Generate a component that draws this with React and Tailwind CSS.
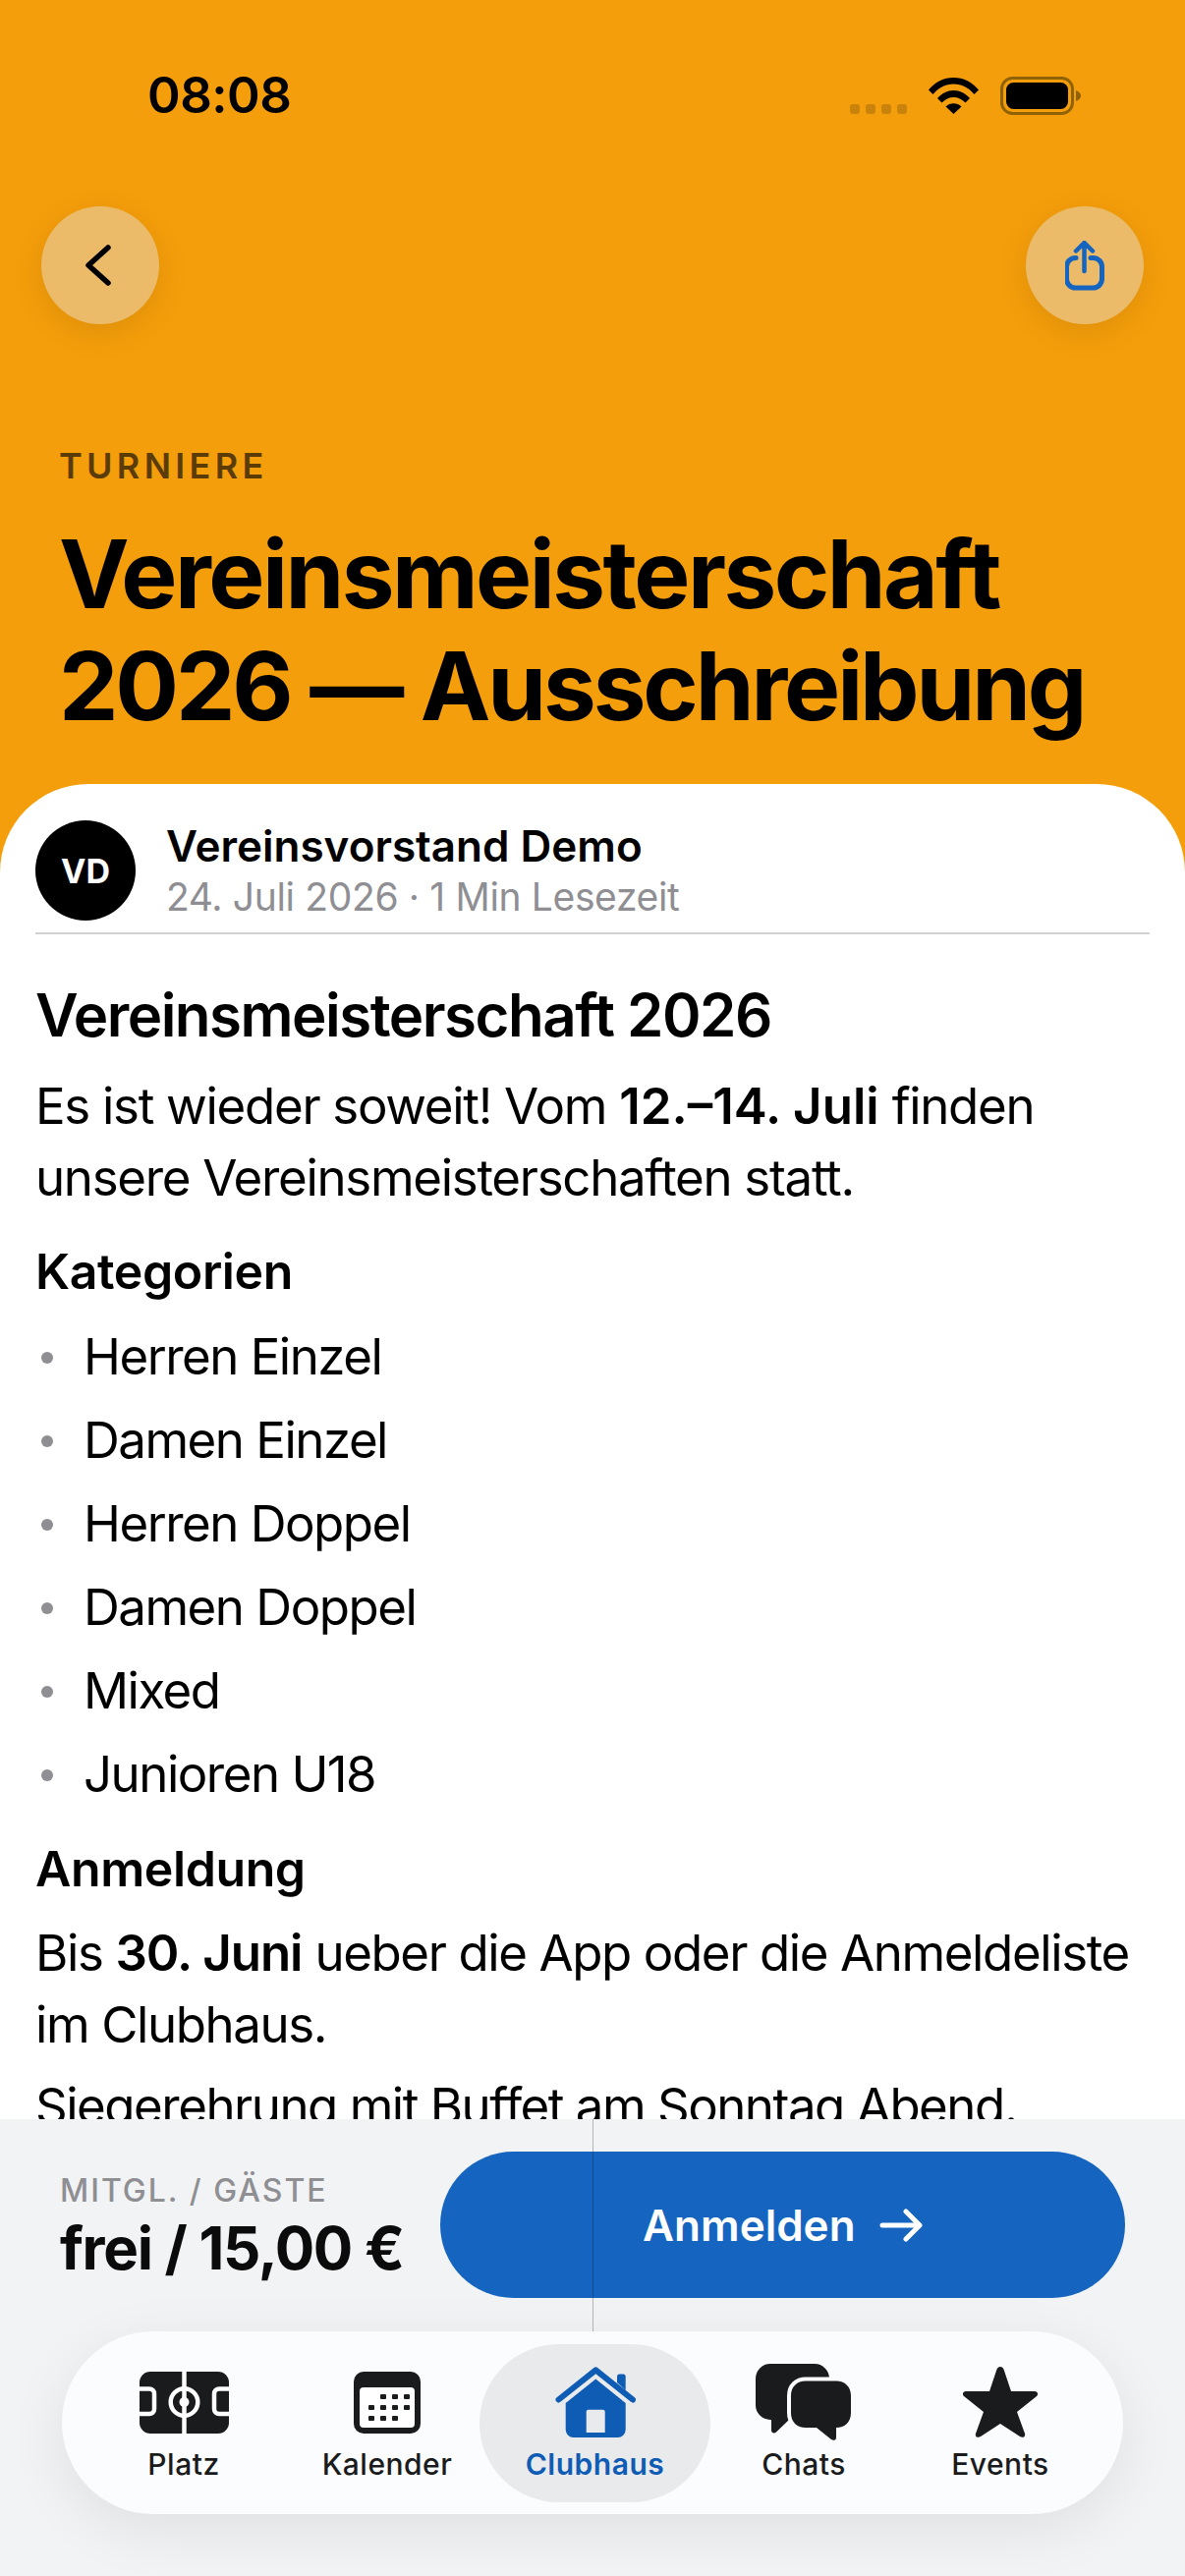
import React from 'react';

const WifiIcon = () => (
    <svg width="51" height="37" viewBox="0 0 51 37" fill="black">
        <path d="M0 12.5C6.5 4.5 15.5 0 25.5 0s19 4.500 25.500 12.500L46.500 17C41 10.500 33.500 6.500 25.500 6.500S10 10.500 4.500 17z" />
        <path d="M9 21C13.500 16 19 13 25.500 13S37.500 16 42 21l-4.500 4.500C34 22 30 20 25.500 20s-8.500 2-12 5.500z" />
        <path d="M17.500 29.500C20 27.300 22.500 26.300 25.500 26.300s5.500 1 8 3.200L25.500 37z" />
    </svg>
);

const BatteryIcon = () => (
    <svg width="82" height="39" viewBox="0 0 82 39">
        <rect x="1.500" y="1.500" width="72" height="36" rx="11" fill="none" stroke="#8f6205" strokeWidth="3" />
        <rect x="6" y="6" width="63" height="27" rx="7.500" fill="black" />
        <path d="M77 14c3 1 5 3 5 5.500S80 24 77 25z" fill="#8f6205" />
    </svg>
);

const ChevronLeft = () => (
    <svg className="mr-[4px]" width="26" height="42" viewBox="0 0 26 42" fill="none" stroke="black" strokeWidth="5.500" strokeLinecap="round" strokeLinejoin="round">
        <path d="M23 3 3 21l20 18" />
    </svg>
);

const ShareIcon = () => (
    <svg width="40" height="51" viewBox="0 0 40 51" fill="none" stroke="#1565c0" strokeLinecap="round" strokeLinejoin="round">
        <path d="M11 17.500H10.500a9 9 0 0 0-9 9V39a9 9 0 0 0 9 9H28.500a9 9 0 0 0 9-9V26.500a9 9 0 0 0-9-9H26" strokeWidth="5" />
        <path d="M19.500 31V2.500M11 10.500l8.500-8.500 8.500 8.500" strokeWidth="4.500" />
    </svg>
);

const PitchIcon = () => (
    <svg width="91" height="63" viewBox="0 0 91 63">
        <rect width="91" height="63" rx="11" fill="#1a1b1c" />
        <g fill="none" stroke="white" strokeWidth="4.500">
            <path d="M45.500 0v63" />
            <circle cx="45.500" cy="31" r="13.800" />
            <path d="M0 17.500h10a5 5 0 0 1 5 5v15.500a5 5 0 0 1-5 5H0" />
            <path d="M91 17.500H81a5 5 0 0 0-5 5v15.500a5 5 0 0 0 5 5h10" />
        </g>
        <circle cx="45.500" cy="31" r="5" fill="white" />
    </svg>
);

const CalendarIcon = () => (
    <svg width="68" height="63" viewBox="0 0 68 63">
        <rect width="68" height="63" rx="10" fill="#1a1b1c" />
        <rect x="6" y="16" width="56" height="41" rx="4" fill="white" />
        <g fill="#1a1b1c">
            <rect x="27" y="23" width="6" height="5" rx="1" />
            <rect x="39" y="23" width="6" height="5" rx="1" />
            <rect x="51" y="23" width="6" height="5" rx="1" />
            <rect x="15" y="34" width="6" height="5" rx="1" />
            <rect x="27" y="34" width="6" height="5" rx="1" />
            <rect x="39" y="34" width="6" height="5" rx="1" />
            <rect x="51" y="34" width="6" height="5" rx="1" />
            <rect x="15" y="45" width="6" height="5" rx="1" />
            <rect x="27" y="45" width="6" height="5" rx="1" />
            <rect x="39" y="45" width="6" height="5" rx="1" />
        </g>
    </svg>
);

const HomeIcon = () => (
    <svg width="82" height="72" viewBox="0 0 82 72" fill="#0f5cb5">
        <path fillRule="evenodd" d="M41.300 12.500 71.700 37v27a8 8 0 0 1-8 8H18.700a8 8 0 0 1-8-8V37zM33.700 43.700a2 2 0 0 0-2 2V67H50.700V45.700a2 2 0 0 0-2-2z" />
        <path d="M63 16V10a2.500 2.500 0 0 1 2.500-2.500h3.700a2.500 2.500 0 0 1 2.500 2.500V24z" />
        <path d="M3.500 33.500 41.300 3.300l37.700 30.200" fill="none" stroke="#0f5cb5" strokeWidth="6" strokeLinecap="round" strokeLinejoin="round" />
    </svg>
);

const ChatsIcon = () => (
    <svg width="98" height="78" viewBox="0 0 98 78">
        <rect x="0" y="0" width="75" height="57" rx="15" fill="#1a1b1c" />
        <path d="M16 52v15.500c0 3 3 4 5 2L34 57z" fill="#1a1b1c" />
        <path
            d="M51 17.500h31c9 0 15 6 15 15V50c0 9-6 15-15 15v10c0 3-3 3.500-5 2L62 65H51c-9 0-15-6-15-15V32.500c0-9 6-15 15-15z"
            fill="#1a1b1c"
            stroke="#fbfcfd"
            strokeWidth="8"
            paintOrder="stroke"
        />
    </svg>
);

const StarIcon = () => (
    <svg width="76" height="72" viewBox="0 0 76 72" fill="#1a1b1c">
        <path d="M38 0c2 0 3 1 4 4l7 21h24c3 0 4 3 2 5L55 46l8 22c1 3-2 5-5 3L38 58 18 71c-3 2-6 0-5-3l8-22L1 30c-2-2-1-5 2-5h24l7-21c1-3 2-4 4-4z" />
    </svg>
);

const tabs = [
    { label: 'Platz', icon: PitchIcon, width: 'w-[226px]' },
    { label: 'Kalender', icon: CalendarIcon, width: 'w-[188px]' },
    { label: 'Clubhaus', icon: HomeIcon, width: 'w-[235px]', active: true },
    { label: 'Chats', icon: ChatsIcon, width: 'w-[190px]' },
    { label: 'Events', icon: StarIcon, width: 'w-[210px]' }
];

const kategorien = ['Herren Einzel', 'Damen Einzel', 'Herren Doppel', 'Damen Doppel', 'Mixed', 'Junioren U18'];

export default function App() {
    return (
        <div className="flex h-[2622px] w-[1206px] flex-col overflow-hidden bg-[#f59e0b] font-['Inter',sans-serif] text-black">
            {/* Header */}
            <div className="flex h-[798px] shrink-0 flex-col">
                <div className="flex h-[210px] shrink-0 items-start justify-between pt-[72px] pl-[150px] pr-[106px]">
                    <span className="text-[51px] leading-[50px] font-semibold tracking-[-0.500px]">08:08</span>
                    <div className="flex items-end pt-[6px]">
                        <div className="mr-[22px] mb-[1px] flex gap-[6px]">
                            <div className="h-[10px] w-[10px] rounded-[3px] bg-[#c9830c]" />
                            <div className="h-[10px] w-[10px] rounded-[3px] bg-[#c9830c]" />
                            <div className="h-[10px] w-[10px] rounded-[3px] bg-[#c9830c]" />
                            <div className="h-[10px] w-[10px] rounded-[3px] bg-[#c9830c]" />
                        </div>
                        <div className="mb-[1px] flex">
                            <WifiIcon />
                        </div>
                        <div className="ml-[22px] flex">
                            <BatteryIcon />
                        </div>
                    </div>
                </div>

                <div className="flex shrink-0 justify-between px-[42px]">
                    <div className="flex h-[120px] w-[120px] items-center justify-center rounded-full bg-[#ebbb6a] shadow-[0_8px_32px_rgba(0,0,0,0.1)]">
                        <ChevronLeft />
                    </div>
                    <div className="flex h-[120px] w-[120px] items-center justify-center rounded-full bg-[#ebbb6a] shadow-[0_8px_32px_rgba(0,0,0,0.1)]">
                        <ShareIcon />
                    </div>
                </div>

                <div className="px-[60px] pt-[122px]">
                    <div className="text-[36px] leading-[44px] font-semibold tracking-[4.300px] text-[#5c3c06]">TURNIERE</div>
                    <h1 className="mt-[31px] text-[96px] leading-[114px] font-bold tracking-[-2.500px] whitespace-nowrap">
                        Vereinsmeisterschaft<br /><span className="tracking-[-3.100px]">2026 — Ausschreibung</span>
                    </h1>
                </div>
            </div>

            {/* Article */}
            <div className="min-h-0 flex-1 overflow-hidden rounded-t-[90px] bg-white px-[36px] pt-[36px]">
                <div className="flex items-center gap-[31px]">
                    <div className="flex h-[102px] w-[102px] items-center justify-center rounded-full bg-black text-[34px] font-bold text-white">VD</div>
                    <div>
                        <div className="text-[44px] leading-[54px] font-semibold">Vereinsvorstand Demo</div>
                        <div className="text-[39px] leading-[50px] tracking-[-0.350px] text-[#8e8e93]">24. Juli 2026 · 1 Min Lesezeit</div>
                    </div>
                </div>
                <div className="mt-[11px] h-[2px] bg-[#d1d1d6]" />

                <h2 className="mt-[46px] text-[60px] leading-[72px] font-semibold tracking-[-1.500px]">Vereinsmeisterschaft 2026</h2>
                <p className="mt-[20px] text-[51px] leading-[73px] tracking-[-1.300px] whitespace-nowrap">
                    Es ist wieder soweit! Vom <b className="font-semibold tracking-normal">12.–14. Juli</b> finden<br />unsere Vereinsmeisterschaften statt.
                </p>

                <h3 className="mt-[27px] text-[50px] leading-[64px] font-semibold tracking-[-0.400px]">Kategorien</h3>
                <ul className="mt-[13px]">
                    {kategorien.map((name) => (
                        <li key={name} className="flex h-[85px] items-center text-[51px] tracking-[-1.500px]">
                            <span className="ml-[6px] mr-[31px] h-[12px] w-[12px] rounded-full bg-[#8e8e93]" />
                            {name}
                        </li>
                    ))}
                </ul>

                <h3 className="mt-[21px] text-[50px] leading-[64px] font-semibold tracking-[-0.400px]">Anmeldung</h3>
                <p className="mt-[17px] text-[51px] leading-[73px] tracking-[-1.400px] whitespace-nowrap">
                    Bis <b className="font-semibold tracking-[-1px]">30. Juni</b> ueber die App oder die Anmeldeliste<br />im Clubhaus.
                </p>
                <p className="mt-[10px] text-[51px] leading-[73px] tracking-[-1.500px] whitespace-nowrap">Siegerehrung mit Buffet am Sonntag Abend.</p>
            </div>

            {/* Bottom panel */}
            <div className="relative h-[465px] shrink-0 bg-[#f2f3f4]">
                <div className="absolute top-0 left-[603px] z-10 h-[216px] w-px bg-black/25" />
                <div className="flex h-[216px] items-start px-[61px] pt-[33px]">
                    <div className="w-[387px] pt-[21px]">
                        <div className="text-[32px] leading-[38px] font-medium tracking-[2px] text-[#8e8e93]">MITGL. / GÄSTE</div>
                        <div className="mt-[3px] text-[60px] leading-[72px] font-bold tracking-[-1.300px] text-[#0b0b0b]">frei / 15,00 €</div>
                    </div>
                    <div className="flex h-[149px] w-[698px] items-center justify-center gap-[24px] rounded-full bg-[#1565c0] text-[44px] font-semibold text-white">
                        Anmelden
                        <svg width="44" height="34" viewBox="0 0 44 34" fill="none" stroke="white" strokeWidth="5" strokeLinecap="round" strokeLinejoin="round">
                            <path d="M3 17h38M27 3l14 14-14 14" />
                        </svg>
                    </div>
                </div>

                <div className="mx-[63px] flex h-[186px] items-center rounded-full bg-[#fbfcfd] pl-[11px] shadow-[0_16px_60px_rgba(0,0,0,0.08)]">
                    {tabs.map((tab) => {
                        const Icon = tab.icon;
                        return (
                            <div
                                key={tab.label}
                                className={`flex h-[161px] shrink-0 flex-col items-center justify-center rounded-full ${tab.width} ${tab.active ? 'bg-[#e9eaeb] text-[#0f5cb5]' : 'text-[#1a1b1c]'}`}
                            >
                                <div className="flex h-[78px] items-center justify-center">
                                    <Icon />
                                </div>
                                <span className={`mt-[6px] text-[30px] leading-[36px] tracking-[0.500px] ${tab.active ? 'font-semibold' : 'font-medium'}`}>{tab.label}</span>
                            </div>
                        );
                    })}
                </div>
            </div>
        </div>
    );
}
